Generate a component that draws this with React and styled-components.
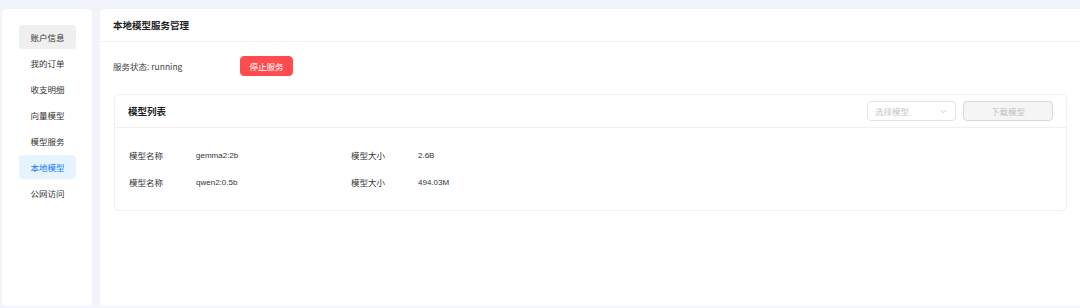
import styled, { createGlobalStyle } from "styled-components";

const GlobalStyle = createGlobalStyle`
  html, body {
    margin: 0;
    padding: 0;
    background: #f1f4fa;
    font-family: "Noto Sans CJK SC", "Noto Sans", sans-serif;
    color: #333;
  }
`;

const Page = styled.div`
  display: flex;
  gap: 8px;
  height: 308px;
  box-sizing: border-box;
  padding: 9px 0 2px 2px;
`;

const Sidebar = styled.nav`
  width: 90px;
  flex-shrink: 0;
  background: #fff;
  border-radius: 5px;
  padding-top: 16px;
  display: flex;
  flex-direction: column;
  align-items: center;
  gap: 2px;
`;

const NavItem = styled.div`
  width: 57px;
  height: 24px;
  margin-left: 1px;
  border-radius: 4px;
  display: flex;
  align-items: center;
  justify-content: center;
  font-size: 8.5px;
  color: ${(p) => (p.$active ? "#1677ff" : "#333")};
  background: ${(p) => (p.$active ? "#e6f4ff" : p.$hover ? "#efefef" : "transparent")};
`;

const Main = styled.main`
  flex: 1;
  background: #fff;
  border-radius: 5px 0 0 5px;
  display: flex;
  flex-direction: column;
`;

const Header = styled.div`
  height: 32px;
  padding-left: 13px;
  border-bottom: 1px solid #f2f2f2;
  display: flex;
  align-items: center;
  font-size: 9.5px;
  font-weight: 700;
  color: #222;
`;

const StatusRow = styled.div`
  display: flex;
  align-items: center;
  margin-top: 14px;
  padding-left: 13px;
`;

const StatusText = styled.span`
  width: 127px;
  font-size: 8.5px;
  color: #444;
`;

const Button = styled.button`
  height: 20px;
  border-radius: 4px;
  font-family: inherit;
  font-size: 8.5px;
  padding: 0;
  width: ${(p) => p.$width}px;
  border: 1px solid ${(p) => (p.$danger ? "#ff4d4f" : "#d9d9d9")};
  background: ${(p) => (p.$danger ? "#ff4d4f" : "#f5f5f5")};
  color: ${(p) => (p.$danger ? "#fff" : "#bfbfbf")};
`;

const Card = styled.section`
  margin: 18px 13px 0 14px;
  border: 1px solid #f0f0f0;
  border-radius: 5px;
`;

const CardHeader = styled.div`
  height: 32px;
  padding: 0 13px;
  border-bottom: 1px solid #f0f0f0;
  display: flex;
  align-items: center;
  justify-content: space-between;
`;

const CardTitle = styled.span`
  font-size: 9.5px;
  font-weight: 700;
  color: #222;
`;

const Tools = styled.div`
  display: flex;
  align-items: center;
  gap: 7px;
`;

const Select = styled.div`
  width: 89px;
  height: 20px;
  box-sizing: border-box;
  border: 1px solid #e3e3e3;
  border-radius: 4px;
  padding: 0 7px;
  display: flex;
  align-items: center;
  justify-content: space-between;
  font-size: 8.5px;
  color: #c4c4c4;
`;

const CardBody = styled.div`
  padding: 18px 14px 19px;
  display: flex;
  flex-direction: column;
  gap: 9px;
`;

const Row = styled.div`
  display: flex;
  align-items: center;
  height: 18px;
  font-size: 8.5px;
  color: #333;
`;

const Label = styled.span`
  width: 67px;
`;

const Value = styled.span`
  width: ${(p) => p.$width}px;
  font-family: "Liberation Sans", "Noto Sans CJK SC", sans-serif;
  font-size: 8px;
`;

const navItems = ["账户信息", "我的订单", "收支明细", "向量模型", "模型服务", "本地模型", "公网访问"];

const models = [
  { name: "gemma2:2b", size: "2.6B" },
  { name: "qwen2:0.5b", size: "494.03M" },
];

export default function App() {
  return (
    <>
      <GlobalStyle />
      <Page>
        <Sidebar>
          {navItems.map((item, i) => (
            <NavItem key={item} $hover={i === 0} $active={item === "本地模型"}>
              {item}
            </NavItem>
          ))}
        </Sidebar>
        <Main>
          <Header>本地模型服务管理</Header>
          <StatusRow>
            <StatusText>服务状态: running</StatusText>
            <Button $danger $width={53}>停止服务</Button>
          </StatusRow>
          <Card>
            <CardHeader>
              <CardTitle>模型列表</CardTitle>
              <Tools>
                <Select>
                  <span>选择模型</span>
                  <svg width="9" height="9" viewBox="0 0 10 10">
                    <path d="M2 3.5 L5 6.5 L8 3.5" fill="none" stroke="#c4c4c4" strokeWidth="0.9" />
                  </svg>
                </Select>
                <Button $width={90}>下载模型</Button>
              </Tools>
            </CardHeader>
            <CardBody>
              {models.map((m) => (
                <Row key={m.name}>
                  <Label>模型名称</Label>
                  <Value $width={155}>{m.name}</Value>
                  <Label>模型大小</Label>
                  <Value $width={100}>{m.size}</Value>
                </Row>
              ))}
            </CardBody>
          </Card>
        </Main>
      </Page>
    </>
  );
}
